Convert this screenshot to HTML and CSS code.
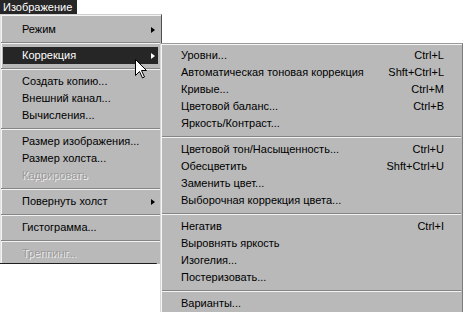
FILE: index.html
```html
<!DOCTYPE html>
<html lang="ru">
<head>
<meta charset="utf-8">
<title>Изображение</title>
<link rel="stylesheet" href="styles.css">
</head>
<body>
<div class="screen">
  <div class="menubar">
    <span class="menubar-item">Изображение</span>
  </div>
  <div class="workspace">
    <div class="menu main-menu">
      <div class="item"><span class="label">Режим</span><span class="arrow"></span></div>
      <div class="sep"></div>
      <div class="item active"><span class="label">Коррекция</span><span class="arrow"></span></div>
      <div class="sep"></div>
      <div class="item"><span class="label">Создать копию...</span></div>
      <div class="item"><span class="label">Внешний канал...</span></div>
      <div class="item"><span class="label">Вычисления...</span></div>
      <div class="sep"></div>
      <div class="item"><span class="label">Размер изображения...</span></div>
      <div class="item"><span class="label">Размер холста...</span></div>
      <div class="item disabled"><span class="label">Кадрировать</span></div>
      <div class="sep"></div>
      <div class="item"><span class="label">Повернуть холст</span><span class="arrow"></span></div>
      <div class="sep"></div>
      <div class="item"><span class="label">Гистограмма...</span></div>
      <div class="sep"></div>
      <div class="item disabled"><span class="label">Треппинг...</span></div>
    </div>
    <div class="lower">
      <div class="canvas"></div>
    </div>
  </div>

  <div class="menu submenu">
    <div class="item"><span class="label">Уровни...</span><span class="key">Ctrl+L</span></div>
    <div class="item"><span class="label">Автоматическая тоновая коррекция</span><span class="key">Shft+Ctrl+L</span></div>
    <div class="item"><span class="label">Кривые...</span><span class="key">Ctrl+M</span></div>
    <div class="item"><span class="label">Цветовой баланс...</span><span class="key">Ctrl+B</span></div>
    <div class="item"><span class="label">Яркость/Контраст...</span></div>
    <div class="sep"></div>
    <div class="item"><span class="label">Цветовой тон/Насыщенность...</span><span class="key">Ctrl+U</span></div>
    <div class="item"><span class="label">Обесцветить</span><span class="key">Shft+Ctrl+U</span></div>
    <div class="item"><span class="label">Заменить цвет...</span></div>
    <div class="item"><span class="label">Выборочная коррекция цвета...</span></div>
    <div class="sep"></div>
    <div class="item"><span class="label">Негатив</span><span class="key">Ctrl+I</span></div>
    <div class="item"><span class="label">Выровнять яркость</span></div>
    <div class="item"><span class="label">Изогелия...</span></div>
    <div class="item"><span class="label">Постеризовать...</span></div>
    <div class="sep"></div>
    <div class="item"><span class="label">Варианты...</span></div>
  </div>

  <svg class="cursor" width="13" height="20" viewBox="0 0 13 20">
    <path d="M0.5 0.5 L0.5 16.5 L4.5 12.5 L7.5 19 L9.5 18 L6.5 11.5 L11.5 11.5 Z" fill="#fff" stroke="#000" stroke-width="1" stroke-linejoin="miter"/>
  </svg>
</div>
</body>
</html>
```
FILE: styles.css
```css
html, body {
  margin: 0;
  padding: 0;
  background: #fff;
}

.screen {
  position: relative;
  width: 463px;
  height: 313px;
  overflow: hidden;
  background: #fff;
  font-family: "Liberation Sans", Arial, sans-serif;
  font-size: 11px;
  color: #000;
}

.menubar {
  display: flex;
  height: 14px;
}

.menubar-item {
  background: #262626;
  color: #fff;
  line-height: 14px;
  padding: 0 5px 0 3px;
}

.workspace {
  display: flex;
  flex-direction: column;
  width: 162px;
}

.menu {
  background: #b9b9b9;
}

.main-menu {
  width: 155px;
  border-left: 1px solid #e2e2e2;
  border-top: 1px solid #cfcfcf;
  border-right: 1px solid #505050;
  box-shadow: inset 1px 1px 0 #f4f4f4;
  padding: 6px 3px 1px 2px;
}

.item {
  display: flex;
  align-items: center;
  height: 17px;
  line-height: 17px;
  white-space: nowrap;
}

.main-menu .item {
  padding-left: 19px;
}

.item .label {
  flex: 1;
}

.item.active {
  background: #262626;
  color: #fff;
}

.item.disabled {
  color: #9a9a9a;
  text-shadow: 1px 1px 0 #ededed;
}

.arrow {
  width: 0;
  height: 0;
  border-left: 4px solid #000;
  border-top: 3.5px solid transparent;
  border-bottom: 3.5px solid transparent;
  margin-right: 3px;
}

.item.active .arrow {
  border-left-color: #fff;
}

.sep {
  box-sizing: border-box;
  height: 9px;
  padding-top: 4px;
  margin: 0 -2px;
}

.sep::before {
  content: "";
  display: block;
  height: 1px;
  background: #858585;
  border-bottom: 1px solid #f2f2f2;
}

.lower {
  display: flex;
  flex: 1;
  height: 50px;
  background: #b9b9b9;
}

.canvas {
  width: 156px;
  background: #f2f2f2;
  border-top: 1px solid #1e1e1e;
  border-right: 1px solid #6a6a6a;
}

.submenu {
  position: absolute;
  left: 160px;
  top: 43px;
  width: 297px;
  border-top: 1px solid #9a9a9a;
  border-left: 1px solid #d8d8d8;
  border-right: 2px solid #7a7a7a;
  box-shadow: inset 1px 1px 0 #f6f6f6;
  padding: 3px 2px 0 2px;
}

.submenu .item {
  padding-left: 18px;
  padding-right: 16px;
}

.key {
  text-align: right;
}

.submenu .sep {
  margin: 0 -1px;
}

.cursor {
  position: absolute;
  left: 135px;
  top: 59px;
}
```
